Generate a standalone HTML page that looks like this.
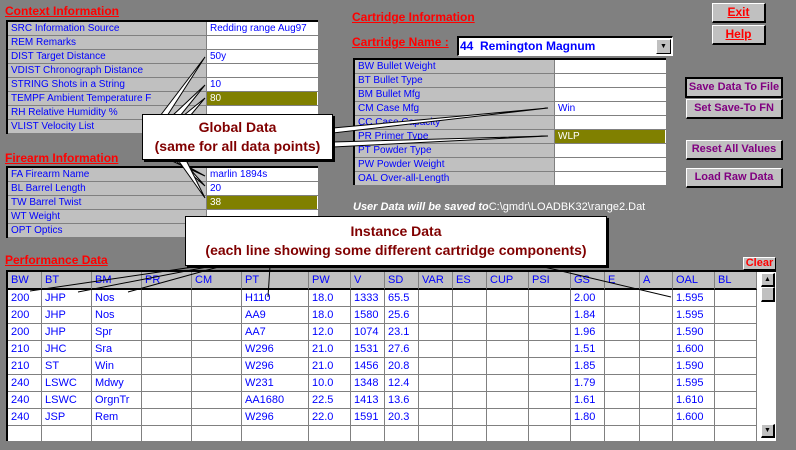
<!DOCTYPE html>
<html><head><meta charset="utf-8"><style>
*{margin:0;padding:0;box-sizing:border-box}
body{width:796px;height:450px;background:#808080;position:relative;overflow:hidden;font-family:"Liberation Sans",Arial,sans-serif;font-size:10px;white-space:nowrap}
.a{position:absolute}
.title{position:absolute;color:#ff0000;font-weight:bold;font-size:12px;text-decoration:underline}
.tbl{position:absolute;background:#fff;border-top:2px solid #000;border-left:2px solid #000}
.row{position:absolute;left:0;right:0;height:14px;border-bottom:1px solid #808080}
.lab{position:absolute;left:0;top:0;height:13px;background:#c0c0c0;color:#0000ff;padding-left:3px;line-height:13px;border-right:1px solid #808080;overflow:hidden}
.val{position:absolute;top:0;height:13px;width:110px;color:#0000ff;padding-left:3px;line-height:13px;overflow:hidden}
.olive{background:#808000;color:#fff}
.btn{position:absolute;background:#c0c0c0;border-top:1px solid #fff;border-left:1px solid #fff;border-right:2px solid #000;border-bottom:2px solid #000;font-weight:bold;font-size:11px;text-align:center;color:#800080}
.grid{position:absolute;left:6px;top:270px;width:770px;height:171px;background:#fff;border-top:2px solid #000;border-left:2px solid #000}
.c{position:absolute;height:17px;border-right:1px solid #808080;border-bottom:1px solid #808080;color:#0000ff;padding-left:3px;line-height:16px;font-size:11px;overflow:hidden}
.h{background:#c0c0c0;border-bottom:2px solid #000}
.callout{position:absolute;background:#fff;border:1px solid #000;box-shadow:2px 2px 0 #000;color:#800000;font-weight:bold;text-align:center}
</style></head><body>

<div class="title" style="left:5px;top:4px">Context Information</div>
<div class="tbl" style="left:6px;top:20px;width:312px;height:114px">
 <div class="row" style="top:0"><div class="lab" style="width:199px">SRC Information Source</div><div class="val" style="left:199px">Redding range Aug97</div></div>
 <div class="row" style="top:14px"><div class="lab" style="width:199px">REM Remarks</div></div>
 <div class="row" style="top:28px"><div class="lab" style="width:199px">DIST Target Distance</div><div class="val" style="left:199px">50y</div></div>
 <div class="row" style="top:42px"><div class="lab" style="width:199px">VDIST Chronograph Distance</div></div>
 <div class="row" style="top:56px"><div class="lab" style="width:199px">STRING Shots in a String</div><div class="val" style="left:199px">10</div></div>
 <div class="row" style="top:70px"><div class="lab" style="width:199px">TEMPF Ambient Temperature F</div><div class="val olive" style="left:199px">80</div></div>
 <div class="row" style="top:84px"><div class="lab" style="width:199px">RH Relative Humidity %</div></div>
 <div class="row" style="top:98px"><div class="lab" style="width:199px">VLIST Velocity List</div></div>
</div>

<div class="title" style="left:5px;top:151px">Firearm Information</div>
<div class="tbl" style="left:6px;top:166px;width:312px;height:72px">
 <div class="row" style="top:0"><div class="lab" style="width:199px">FA Firearm Name</div><div class="val" style="left:199px">marlin 1894s</div></div>
 <div class="row" style="top:14px"><div class="lab" style="width:199px">BL Barrel Length</div><div class="val" style="left:199px">20</div></div>
 <div class="row" style="top:28px"><div class="lab" style="width:199px">TW Barrel Twist</div><div class="val olive" style="left:199px">38</div></div>
 <div class="row" style="top:42px"><div class="lab" style="width:199px">WT Weight</div></div>
 <div class="row" style="top:56px"><div class="lab" style="width:199px">OPT Optics</div></div>
</div>

<div class="title" style="left:352px;top:10px">Cartridge Information</div>
<div class="title" style="left:352px;top:35px">Cartridge Name :</div>
<div class="a" style="left:457px;top:36px;width:216px;height:20px;background:#fff;border-top:2px solid #000;border-left:2px solid #000;border-right:1px solid #fff;border-bottom:1px solid #fff;color:#0000ff;font-weight:bold;font-size:12px;line-height:16px;padding-left:1px">44&nbsp; Remington Magnum
 <div class="a" style="right:1px;top:1px;width:15px;height:15px;background:#c0c0c0;border-top:1px solid #fff;border-left:1px solid #fff;border-right:1px solid #000;border-bottom:1px solid #000;font-size:7px;line-height:13px;text-align:center;color:#000">▼</div></div>
<div class="tbl" style="left:353px;top:58px;width:313px;height:127px">
 <div class="row" style="top:0"><div class="lab" style="width:200px">BW Bullet Weight</div></div>
 <div class="row" style="top:14px"><div class="lab" style="width:200px">BT Bullet Type</div></div>
 <div class="row" style="top:28px"><div class="lab" style="width:200px">BM Bullet Mfg</div></div>
 <div class="row" style="top:42px"><div class="lab" style="width:200px">CM Case Mfg</div><div class="val" style="left:200px">Win</div></div>
 <div class="row" style="top:56px"><div class="lab" style="width:200px">CC Case Capacity</div></div>
 <div class="row" style="top:70px"><div class="lab" style="width:200px">PR Primer Type</div><div class="val olive" style="left:200px">WLP</div></div>
 <div class="row" style="top:84px"><div class="lab" style="width:200px">PT Powder Type</div></div>
 <div class="row" style="top:98px"><div class="lab" style="width:200px">PW Powder Weight</div></div>
 <div class="row" style="top:112px"><div class="lab" style="width:200px">OAL Over-all-Length</div></div>
</div>

<div class="btn" style="left:712px;top:3px;width:54px;height:20px;color:#ff0000;font-size:12px;line-height:16px;text-decoration:underline">Exit</div>
<div class="btn" style="left:712px;top:25px;width:54px;height:20px;color:#ff0000;font-size:12px;line-height:16px;text-decoration:underline">Help</div>
<div class="btn" style="left:685px;top:77px;width:98px;height:21px;border:2px solid #000;line-height:16px;color:#800080">Save Data To File</div>
<div class="btn" style="left:686px;top:99px;width:97px;height:20px;line-height:16px">Set Save-To FN</div>
<div class="btn" style="left:686px;top:140px;width:97px;height:20px;line-height:16px">Reset All Values</div>
<div class="btn" style="left:686px;top:168px;width:97px;height:20px;line-height:16px">Load Raw Data</div>

<div class="a" style="left:353px;top:201px;color:#fff;font-weight:bold;font-style:italic;font-size:11px">User Data will be saved to<span style="font-style:normal;font-weight:normal">C:\gmdr\LOADBK32\range2.Dat</span></div>

<div class="title" style="left:5px;top:253px">Performance Data</div>
<div class="btn" style="left:743px;top:257px;width:33px;height:13px;color:#ff0000;font-size:11px;line-height:10px;border-width:1px">Clear</div>

<div class="grid" id="g"></div>

<svg class="a" style="left:0;top:0" width="796" height="450">
 <g fill="#fff" stroke="#000" stroke-width="1">
  <polygon points="160,116 205,57 167,116"/>
  <polygon points="172,116 205,85 180,116"/>
  <polygon points="183,116 205,98 190,116"/>
  <polygon points="170,160 205,176 176,160"/>
  <polygon points="175,160 205,186 182,160"/>
  <polygon points="178,160 205,198 186,160"/>
  <polygon points="333,128 548,108 333,133"/>
  <polygon points="333,142 548,136 333,147"/>
 </g>
 <g stroke="#000" stroke-width="1" fill="none">
  <line x1="200" y1="266" x2="30" y2="291"/>
  <line x1="212" y1="266" x2="78" y2="292"/>
  <line x1="222" y1="266" x2="128" y2="292"/>
  <line x1="270" y1="266" x2="268" y2="297"/>
  <line x1="540" y1="266" x2="671" y2="297"/>
 </g>
</svg>

<div class="callout" style="left:142px;top:114px;width:191px;height:46px;font-size:14px;line-height:19px;padding-top:3px">Global Data<br>(same for all data points)</div>
<div class="callout" style="left:185px;top:216px;width:422px;height:50px;font-size:14px;line-height:19px;padding-top:5px">Instance Data<br>(each line showing some different cartridge components)</div>

<script>
var cols=[[0,"BW"],[34,"BT"],[84,"BM"],[134,"PR"],[184,"CM"],[234,"PT"],[301,"PW"],[343,"V"],[377,"SD"],[411,"VAR"],[445,"ES"],[479,"CUP"],[521,"PSI"],[563,"GS"],[597,"E"],[632,"A"],[665,"OAL"],[707,"BL"],[749,""]];
var data=[["200","JHP","Nos","","","H110","18.0","1333","65.5","","","","","2.00","","","1.595",""],
["200","JHP","Nos","","","AA9","18.0","1580","25.6","","","","","1.84","","","1.595",""],
["200","JHP","Spr","","","AA7","12.0","1074","23.1","","","","","1.96","","","1.590",""],
["210","JHC","Sra","","","W296","21.0","1531","27.6","","","","","1.51","","","1.600",""],
["210","ST","Win","","","W296","21.0","1456","20.8","","","","","1.85","","","1.590",""],
["240","LSWC","Mdwy","","","W231","10.0","1348","12.4","","","","","1.79","","","1.595",""],
["240","LSWC","OrgnTr","","","AA1680","22.5","1413","13.6","","","","","1.61","","","1.610",""],
["240","JSP","Rem","","","W296","22.0","1591","20.3","","","","","1.80","","","1.600",""],
["","","","","","","","","","","","","","","","","",""]];
var g=document.getElementById("g"),h="";
for(var i=0;i<18;i++){var x=cols[i][0],w=cols[i+1][0]-x;
 h+='<div class="c h" style="left:'+x+'px;top:0;width:'+w+'px;height:18px">'+cols[i][1]+'</div>';
 for(var r=0;r<9;r++)h+='<div class="c" style="left:'+x+'px;top:'+(18+r*17)+'px;width:'+w+'px">'+data[r][i]+'</div>';}
h+='<div class="a" style="left:753px;top:0;width:15px;height:169px;background:#fff"></div>';
h+='<div class="btn" style="left:753px;top:1px;width:14px;height:14px;color:#000;font-size:7px;line-height:11px">▲</div>';
h+='<div class="btn" style="left:753px;top:15px;width:14px;height:15px"></div>';
h+='<div class="btn" style="left:753px;top:152px;width:14px;height:14px;color:#000;font-size:7px;line-height:11px">▼</div>';
g.innerHTML=h;
</script>
</body></html>
